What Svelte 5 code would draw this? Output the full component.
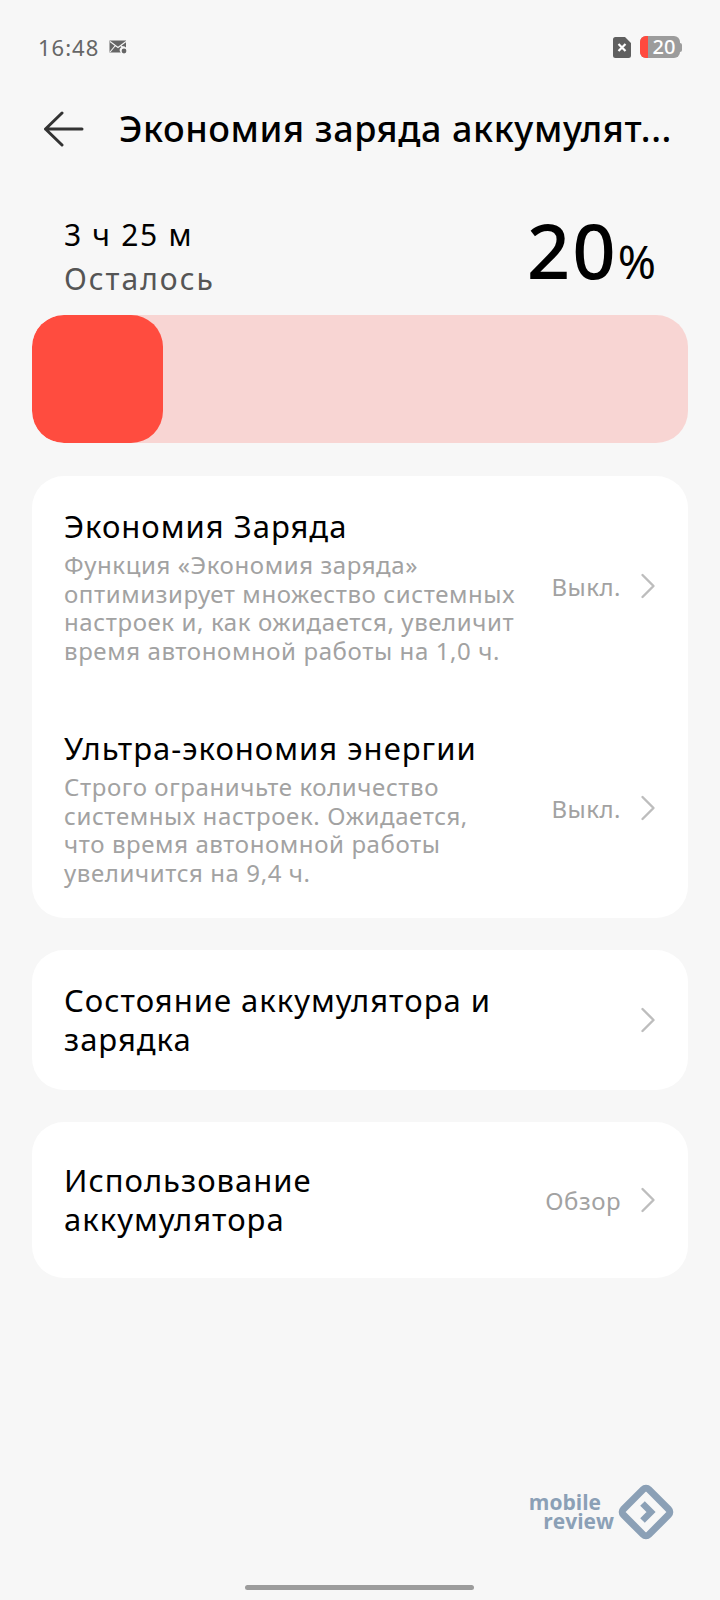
<script lang="ts">
  type Row = {
    title: string;
    desc?: string[];
    value?: string;
  };

  const savers: Row[] = [
    {
      title: "Экономия Заряда",
      desc: [
        "Функция «Экономия заряда»",
        "оптимизирует множество системных",
        "настроек и, как ожидается, увеличит",
        "время автономной работы на 1,0 ч."
      ],
      value: "Выкл."
    },
    {
      title: "Ультра-экономия энергии",
      desc: [
        "Строго ограничьте количество",
        "системных настроек. Ожидается,",
        "что время автономной работы",
        "увеличится на 9,4 ч."
      ],
      value: "Выкл."
    }
  ];
</script>

{#snippet chevron()}
  <svg class="chevron" viewBox="0 0 16 26" aria-hidden="true">
    <path d="M2.5 2 L13.5 13 L2.5 24" />
  </svg>
{/snippet}

<div class="screen">
  <div class="status-bar">
    <div class="status-left">
      <span class="time">16:48</span>
      <svg class="mail" viewBox="0 0 18 14" aria-hidden="true">
        <path d="M0.5 0.5 H17 V7.5 A3.5 3.5 0 0 0 11.8 12.5 H0.5 Z" fill="#666" />
        <path d="M1 1.5 L9 7.5 L17 1.5 M1 12 L6 6 M12 6 L15 8" fill="none" stroke="#f7f7f7" stroke-width="1.1" />
        <circle cx="15" cy="11" r="2.4" fill="#666" />
      </svg>
    </div>
    <div class="status-right">
      <svg class="sim" viewBox="0 0 18 21" aria-hidden="true">
        <path d="M2.5 0 H12 L18 6 V18.5 A2.5 2.5 0 0 1 15.5 21 H2.5 A2.5 2.5 0 0 1 0 18.5 V2.5 A2.5 2.5 0 0 1 2.5 0 Z" fill="#5f5f5f" />
        <path d="M5.5 7 L12.5 14 M12.5 7 L5.5 14" stroke="#fff" stroke-width="2.2" />
      </svg>
      <div class="battery">
        <div class="battery-body">
          <span class="battery-low"></span>
          <span class="battery-num">20</span>
        </div>
        <span class="battery-cap"></span>
      </div>
    </div>
  </div>

  <header class="top-bar">
    <svg class="back" viewBox="0 0 42 36" aria-hidden="true">
      <path d="M19 2 L2.5 18 L19 34 M2.5 18 H39" />
    </svg>
    <h1>Экономия заряда аккумулят...</h1>
  </header>

  <section class="summary">
    <div>
      <p class="remain">3 ч 25 м</p>
      <p class="remain-label">Осталось</p>
    </div>
    <p class="percent">20<span>%</span></p>
  </section>

  <div class="level">
    <div class="level-fill" style="width: 20%"></div>
  </div>

  <section class="card savers">
    {#each savers as row}
      <div class="saver">
        <div class="saver-text">
          <h2>{row.title}</h2>
          <p>
            {#each row.desc ?? [] as line}
              <span>{line}</span>
            {/each}
          </p>
        </div>
        <span class="value">{row.value}</span>
        {@render chevron()}
      </div>
    {/each}
  </section>

  <section class="card link health">
    <h2>Состояние аккумулятора и<br />зарядка</h2>
    {@render chevron()}
  </section>

  <section class="card link usage">
    <h2>Использование<br />аккумулятора</h2>
    <span class="value">Обзор</span>
    {@render chevron()}
  </section>

  <div class="watermark">
    <div class="wm-text">
      <span class="wm-mobile">mobile</span>
      <span>review</span>
    </div>
    <svg class="wm-logo" viewBox="0 0 56 56" aria-hidden="true">
      <rect x="10" y="10" width="36" height="36" rx="4" transform="rotate(45 28 28)" />
      <path class="wm-arrow" d="M24.5 19.5 L33 28 L24.5 36.5" />
    </svg>
  </div>

  <div class="home-bar"></div>
</div>

<style>
  :global(body) {
    margin: 0;
    background: #f7f7f7;
  }

  .screen {
    position: relative;
    display: flex;
    flex-direction: column;
    box-sizing: border-box;
    height: 1600px;
    padding: 0 32px;
    overflow: hidden;
    background: #f7f7f7;
    color: #000;
    font-family: "Noto Sans", "Open Sans", sans-serif;
  }

  p,
  h1,
  h2 {
    margin: 0;
    font-weight: 400;
  }

  .status-bar {
    display: flex;
    align-items: center;
    justify-content: space-between;
    height: 30px;
    margin: 32px 6px 0 6px;
  }

  .status-left,
  .status-right {
    display: flex;
    align-items: center;
  }

  .time {
    color: #666;
    font-size: 22px;
    letter-spacing: 1px;
  }

  .mail {
    width: 18px;
    height: 14px;
    margin-left: 10px;
  }

  .sim {
    width: 18px;
    height: 21px;
  }

  .battery {
    display: flex;
    align-items: center;
    margin-left: 9px;
  }

  .battery-body {
    position: relative;
    display: flex;
    align-items: center;
    justify-content: center;
    width: 40px;
    height: 22px;
    padding: 0 1px 0 9px;
    box-sizing: border-box;
    border-radius: 6px;
    background: #9c9c9c;
  }

  .battery-low {
    position: absolute;
    top: 0;
    bottom: 0;
    left: 0;
    width: 8px;
    border-radius: 6px 0 0 6px;
    background: #ff4a3e;
  }

  .battery-num {
    color: #fff;
    font-size: 20px;
    font-weight: 500;
    line-height: 1;
  }

  .battery-cap {
    width: 2px;
    height: 9px;
    border-radius: 0 2px 2px 0;
    background: #9c9c9c;
  }

  .top-bar {
    display: flex;
    align-items: center;
    height: 60px;
    margin: 37px 0 0 11px;
  }

  .back {
    flex: none;
    width: 42px;
    height: 36px;
    margin-right: 34px;
  }

  .back path {
    fill: none;
    stroke: #333;
    stroke-width: 3;
    stroke-linecap: round;
    stroke-linejoin: round;
  }

  h1 {
    color: #000;
    font-size: 36px;
    font-weight: 500;
    line-height: 48px;
    letter-spacing: 0.6px;
    white-space: nowrap;
  }

  .summary {
    display: flex;
    align-items: flex-start;
    justify-content: space-between;
    height: 100px;
    margin: 52px 0 0;
    padding: 4px 32px 0;
  }

  .remain {
    font-size: 30px;
    line-height: 40px;
    letter-spacing: 1.7px;
  }

  .remain-label {
    margin-top: 4px;
    color: #555;
    font-size: 30px;
    line-height: 40px;
    letter-spacing: 2px;
  }

  .percent {
    margin-top: -1px;
    font-size: 76px;
    font-weight: 500;
    line-height: 72px;
    letter-spacing: 2px;
  }

  .percent span {
    font-size: 46px;
    font-weight: 400;
    letter-spacing: 0;
  }

  .level {
    flex: none;
    height: 128px;
    overflow: hidden;
    border-radius: 32px;
    background: #f8d5d3;
  }

  .level-fill {
    height: 100%;
    border-radius: 32px;
    background: #ff4c3f;
  }

  .card {
    box-sizing: border-box;
    margin-top: 32px;
    border-radius: 32px;
    background: #fff;
  }

  .savers {
    display: flex;
    flex-direction: column;
    gap: 64px;
    height: 442px;
    margin-top: 33px;
    padding: 31px 32px 0;
  }

  .saver {
    display: flex;
    align-items: center;
  }

  .saver-text {
    flex: 1;
    min-width: 0;
  }

  h2 {
    font-size: 31px;
    line-height: 39px;
    letter-spacing: 1px;
  }

  .saver p {
    margin-top: 5px;
    color: #a2a2a2;
    font-size: 24px;
    line-height: 28.5px;
    letter-spacing: 0.6px;
  }

  .saver p span {
    display: block;
    white-space: nowrap;
  }

  .value {
    flex: none;
    color: #a2a2a2;
    font-size: 24px;
    letter-spacing: 0.5px;
  }

  .chevron {
    flex: none;
    width: 16px;
    height: 26px;
    margin-left: 19px;
  }

  .chevron path {
    fill: none;
    stroke: #bdbdbd;
    stroke-width: 2.4;
    stroke-linecap: round;
    stroke-linejoin: round;
  }

  .link {
    display: flex;
    align-items: center;
    padding: 0 32px;
  }

  .link h2 {
    flex: 1;
  }

  .health {
    height: 140px;
  }

  .usage {
    height: 156px;
  }

  .watermark {
    position: absolute;
    right: 46px;
    bottom: 60px;
    display: flex;
    align-items: center;
    color: #8ba0b6;
  }

  .wm-text {
    display: flex;
    flex-direction: column;
    align-items: flex-end;
    margin-right: 4px;
    font-family: "Open Sans", sans-serif;
    font-size: 21px;
    font-weight: 700;
    line-height: 19px;
  }

  .wm-mobile {
    margin-right: 13px;
  }

  .wm-logo {
    width: 56px;
    height: 56px;
  }

  .wm-logo rect {
    fill: none;
    stroke: #8ba0b6;
    stroke-width: 7;
  }

  .wm-arrow {
    fill: none;
    stroke: #8ba0b6;
    stroke-width: 6.5;
  }

  .home-bar {
    position: absolute;
    bottom: 10px;
    left: 245px;
    width: 229px;
    height: 5px;
    border-radius: 3px;
    background: #9c9c9c;
  }
</style>
